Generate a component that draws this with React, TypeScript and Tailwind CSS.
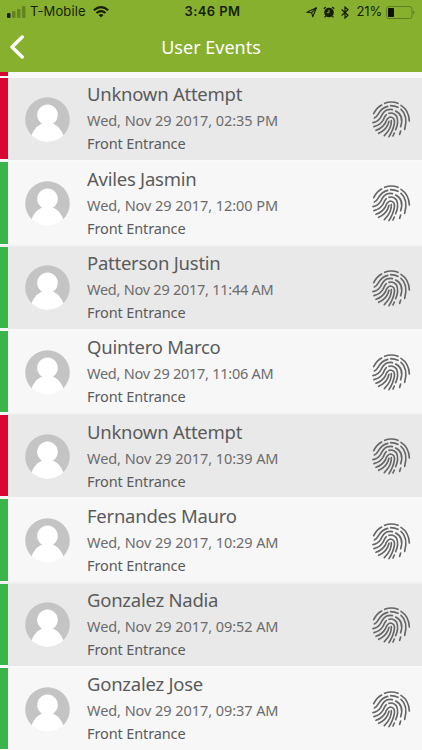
interface UserEvent {
  name: string;
  date: string;
  place: string;
  denied?: boolean;
}

const events: UserEvent[] = [
  { name: 'Unknown Attempt', date: 'Wed, Nov 29 2017, 02:35 PM', place: 'Front Entrance', denied: true },
  { name: 'Aviles Jasmin', date: 'Wed, Nov 29 2017, 12:00 PM', place: 'Front Entrance' },
  { name: 'Patterson Justin', date: 'Wed, Nov 29 2017, 11:44 AM', place: 'Front Entrance' },
  { name: 'Quintero Marco', date: 'Wed, Nov 29 2017, 11:06 AM', place: 'Front Entrance' },
  { name: 'Unknown Attempt', date: 'Wed, Nov 29 2017, 10:39 AM', place: 'Front Entrance', denied: true },
  { name: 'Fernandes Mauro', date: 'Wed, Nov 29 2017, 10:29 AM', place: 'Front Entrance' },
  { name: 'Gonzalez Nadia', date: 'Wed, Nov 29 2017, 09:52 AM', place: 'Front Entrance' },
  { name: 'Gonzalez Jose', date: 'Wed, Nov 29 2017, 09:37 AM', place: 'Front Entrance' },
];

function Fingerprint() {
  return (
    <svg viewBox="33 27 120 120" className="size-10 shrink-0" fill="none" stroke="#666" strokeWidth="5" strokeLinecap="round">
      <path d="M41 71Q50 53 65 45" />
      <path d="M74 40Q94 32 114 40" />
      <path d="M123 46Q147 61 148 93" />
      <path d="M43 84Q50 81 56 70Q66 53 83 49" />
      <path d="M92 47Q104 47 114 52" />
      <path d="M123 58Q145 76 134 118" />
      <path d="M39 98Q54 95 62 82Q70 65 80 60Q90 57 97 59" />
      <path d="M107 63Q133 76 122 110" />
      <path d="M122 123L119 133" />
      <path d="M42 110Q60 105 69 91Q74 78 79 74" />
      <path d="M87 70Q101 66 110 79Q117 98 107 119" />
      <path d="M103 129L99 138" />
      <path d="M48 121Q66 115 76 99Q81 83 91 81Q106 82 103 101Q100 119 87 140" />
      <path d="M56 130Q76 121 84 103L87 94" />
      <path d="M94 92Q96 114 73 137" />
    </svg>
  );
}

function Avatar() {
  return (
    <svg viewBox="0 0 45 45" className="size-[45px] shrink-0">
      <circle cx="22.5" cy="22.5" r="22.3" fill="#c4c4c4" />
      <path d="M6.6 38.4C9 32 13 28 17.3 26.8A10.3 10.3 0 1 1 27.7 26.8C32 28 36 32 38.4 38.4A22.6 22.6 0 0 1 6.6 38.4Z" fill="#fff" />
    </svg>
  );
}

function StatusBar() {
  return (
    <div className="grid h-6 grid-cols-[1fr_auto_1fr] items-center pr-[7px] pl-[7px] font-['Inter'] text-[13px] text-[#151e06]">
      <div className="flex items-center">
        <svg viewBox="0 0 19 12" className="mr-[4px] h-3 w-[19px]">
          <rect x="0" y="7" width="3.5" height="5" rx="1" fill="#151e06" />
          <g fill="#648424">
            <rect x="5" y="5" width="3.5" height="7" rx="1" />
            <rect x="10" y="3" width="3.5" height="9" rx="1" />
            <rect x="15" y="0" width="3.5" height="12" rx="1" />
          </g>
        </svg>
        <span className="tracking-[0.1px]">T-Mobile</span>
        <svg viewBox="0 0 16 12" className="ml-[7px] h-3 w-4" fill="none" stroke="#151e06" strokeWidth="2.1">
          <path d="M.8 4.2Q8-2 15.2 4.2" />
          <path d="M3.5 7Q8 3.3 12.5 7" />
          <path d="M8 11.5L5.5 9Q8 7.2 10.5 9Z" fill="#151e06" stroke="none" />
        </svg>
      </div>
      <span className="pl-[3px] font-semibold tracking-[0.4px]">3:46 PM</span>
      <div className="flex items-center justify-end">
        <svg viewBox="0 0 11 11" className="mr-[6px] size-[11px]" fill="none" stroke="#151e06" strokeWidth="1.1">
          <path d="M10.4 .8L6.8 9.8L5.6 5.7L.8 5.3Z" strokeLinejoin="round" />
          <path d="M10.4 .8L5.6 5.7" />
        </svg>
        <svg viewBox="0 0 12 12" className="mr-[6px] size-3">
          <circle cx="6" cy="6.5" r="4.8" fill="#151e06" />
          <path d="M.8 2.8L2.8 1M11.2 2.8L9.2 1M2.6 10.2L1.6 11.4M9.4 10.2L10.4 11.4" stroke="#151e06" strokeWidth="1.3" />
          <path d="M6 3.8V6.7H3.8" stroke="#88b02f" fill="none" />
        </svg>
        <svg viewBox="0 0 8 13" className="mr-[8px] h-[13px] w-2" fill="none" stroke="#151e06" strokeWidth="1.2">
          <path d="M.6 3.5L7 9.3L4 12V1L7 3.7L.6 9.5" />
        </svg>
        <span className="mr-[4px] tracking-[-0.2px]">21%</span>
        <svg viewBox="0 0 29 13" className="h-[13px] w-[29px]">
          <rect x=".5" y=".5" width="25.5" height="12" rx="2.5" fill="none" stroke="#5f7e22" />
          <rect x="2" y="2" width="6" height="9" rx=".8" fill="#0c1103" />
          <path d="M27.3 4.5Q29.5 6.5 27.3 8.5Z" fill="#52701b" />
        </svg>
      </div>
    </div>
  );
}

function EventRow({ event }: { event: UserEvent }) {
  const dateTracking = event.date.includes(', 11:') ? 'tracking-[-0.25px]' : 'tracking-[-0.06px]';

  return (
    <li className="flex h-[84.3px] shrink-0 border-b-2 border-[#f9f9f9] odd:bg-[#e9e9e9] even:border-[#f0f0f0] even:bg-[#f7f7f7]">
      <div className={event.denied ? 'w-2 border-b border-[#f9f9f9] bg-[#d80630]' : 'w-2 border-b border-[#f9f9f9] bg-[#3bb54a]'} />
      <div className="flex flex-1 items-center pr-[11.5px] pl-[17px]">
        <Avatar />
        <div className="ml-[17px] flex-1 pb-[3.5px] font-['Noto_Sans'] whitespace-nowrap text-[#5b5b5b]">
          <p className="text-[18.5px] leading-6 tracking-[-0.25px]">{event.name}</p>
          <p className={`text-[14.5px] leading-7 text-[#6c6c6c] ${dateTracking}`}>{event.date}</p>
          <p className="text-[14.5px] leading-[18px] tracking-[-0.12px]">{event.place}</p>
        </div>
        <Fingerprint />
      </div>
    </li>
  );
}

export default function App() {
  return (
    <div className="flex h-[750px] w-[422px] flex-col overflow-hidden bg-[#f7f7f7]">
      <header className="h-[72px] shrink-0 bg-[#88b02f]">
        <StatusBar />
        <div className="grid h-[46px] grid-cols-[1fr_auto_1fr] items-center pr-px pl-[9px]">
          <svg viewBox="0 0 16 24" className="h-6 w-4" fill="none" stroke="#fff" strokeWidth="3.4" strokeLinecap="round" strokeLinejoin="round">
            <path d="M13.2 2L3 12L13.2 22" />
          </svg>
          <h1 className="mr-2 font-['Noto_Sans'] text-[18px] text-white">User Events</h1>
        </div>
      </header>
      {/* tail of the row scrolled under the header */}
      <div className="h-[6px] shrink-0 bg-[#f9f9f9]">
        <div className="h-[4px] w-2 bg-[#d80630]" />
      </div>
      <ul className="flex flex-col">
        {events.map((event) => (
          <EventRow key={event.date} event={event} />
        ))}
      </ul>
    </div>
  );
}
